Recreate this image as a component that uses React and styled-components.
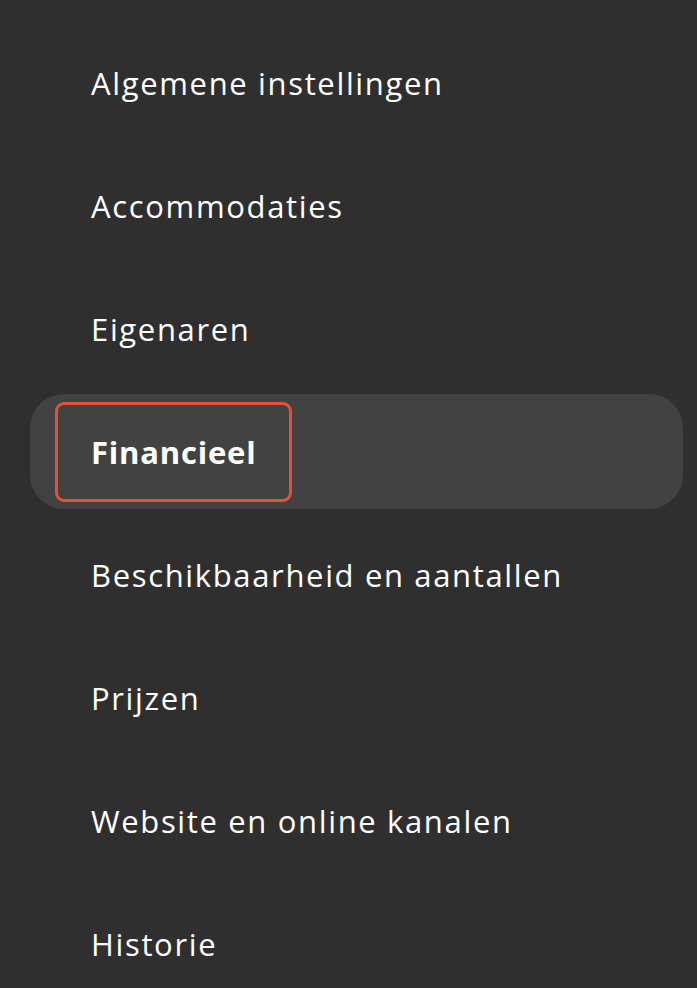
import React from 'react'
import styled, { createGlobalStyle } from 'styled-components'

const GlobalStyle = createGlobalStyle`
   html, body {
      margin: 0;
      padding: 0;
      background: #2f2f2f;
   }
`

const Nav = styled.nav`
   width: 697px;
   height: 988px;
   overflow: hidden;
   box-sizing: border-box;
   padding: 25px 14px 0 30px;
   display: flex;
   flex-direction: column;
   gap: 8px;
   background: #2f2f2f;
   font-family: "Open Sans", "Noto Sans", sans-serif;
`

const Row = styled.div`
   flex-shrink: 0;
   height: 115px;
   display: flex;
   align-items: center;
   padding-left: 25px;
   border-radius: 34px;
   background: ${props => (props.$active ? '#424242' : 'transparent')};
`

const Link = styled.a`
   display: flex;
   align-items: center;
   height: 100px;
   box-sizing: border-box;
   padding: 0 33px;
   border: 3px solid ${props => (props.$active ? '#e4513b' : 'transparent')};
   border-radius: 9px;
   color: #ffffff;
   font-size: 31px;
   letter-spacing: ${props => (props.$active ? '0.8px' : '1.65px')};
   font-weight: ${props => (props.$active ? 700 : 500)};
   text-decoration: none;
   white-space: nowrap;
`

const items = [
   'Algemene instellingen',
   'Accommodaties',
   'Eigenaren',
   'Financieel',
   'Beschikbaarheid en aantallen',
   'Prijzen',
   'Website en online kanalen',
   'Historie',
]

const App = () => {
   const active = 'Financieel'
   return (
      <>
         <GlobalStyle />
         <Nav>
            {items.map((item) => (
               <Row key={item} $active={item === active}>
                  <Link href="#" $active={item === active}>{item}</Link>
               </Row>
            ))}
         </Nav>
      </>
   )
}

export default App
